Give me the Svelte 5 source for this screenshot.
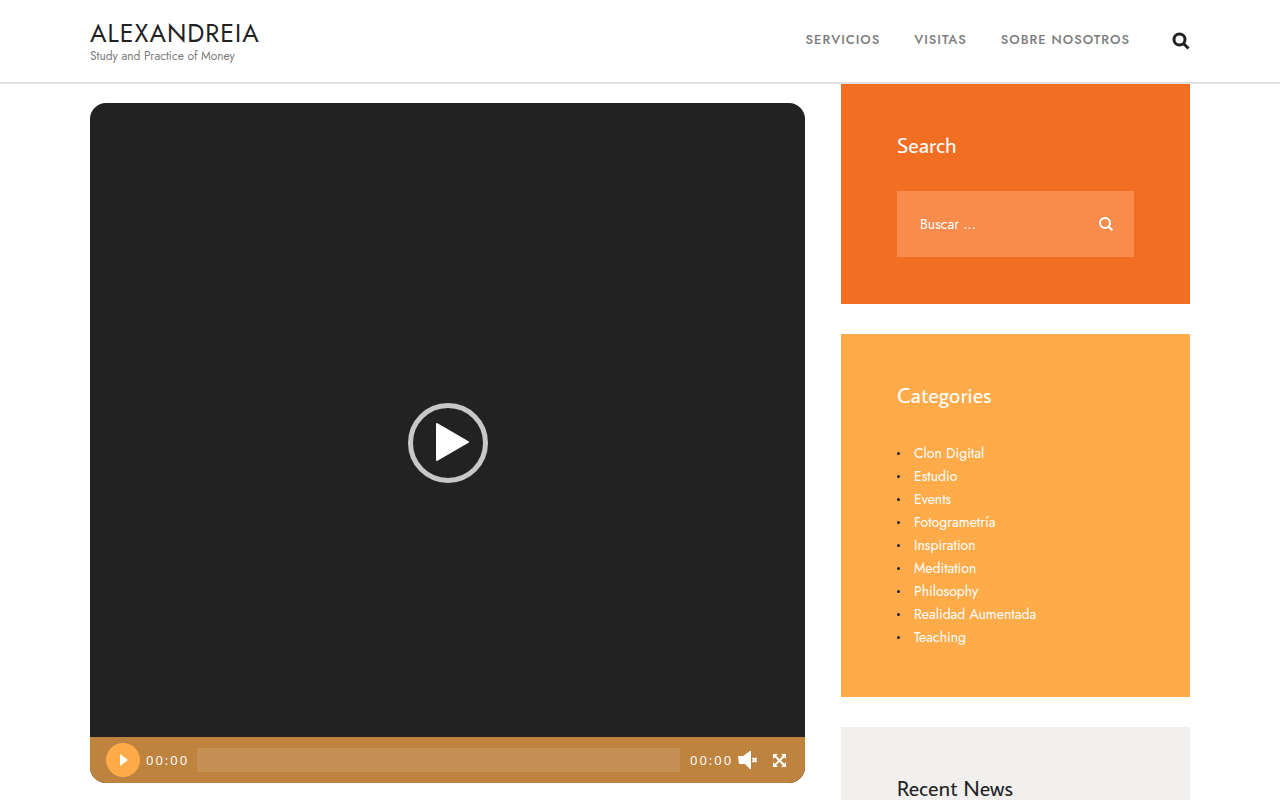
<script lang="ts">
	const navItems = ['Servicios', 'Visitas', 'Sobre Nosotros'];

	const categories = [
		'Clon Digital',
		'Estudio',
		'Events',
		'Fotogrametría',
		'Inspiration',
		'Meditation',
		'Philosophy',
		'Realidad Aumentada',
		'Teaching'
	];

	let query = $state('');
</script>

<header class="site-header">
	<div class="container header-row">
		<div class="brand">
			<a class="brand-name" href="#home">ALEXANDREIA</a>
			<span class="tagline">Study and Practice of Money</span>
		</div>
		<div class="header-right">
			<nav class="menu">
				{#each navItems as item}
					<a href="#{item}">{item}</a>
				{/each}
			</nav>
			<button class="icon-btn" aria-label="Open search">
				<svg width="18" height="18" viewBox="0 0 18 18" fill="none" stroke="#222" stroke-width="3">
					<circle cx="7.5" cy="7.5" r="5.5" />
					<path d="M11.5 11.5 L16.5 16.5" />
				</svg>
			</button>
		</div>
	</div>
</header>

<div class="container content">
	<main>
		<div class="player">
			<button class="big-play" aria-label="Play video">
				<svg width="34" height="40" viewBox="0 0 34 40">
					<path
						d="M2 2 L33 20 L2 38 Z"
						fill="#fff"
						stroke="#fff"
						stroke-width="2"
						stroke-linejoin="round"
					/>
				</svg>
			</button>
			<div class="controls">
				<button class="small-play" aria-label="Play">
					<svg width="10" height="12" viewBox="0 0 10 12">
						<path d="M2 0 L10 6 L2 12 Z" fill="#fff" />
					</svg>
				</button>
				<span class="time">00:00</span>
				<div class="rail"></div>
				<span class="time">00:00</span>
				<button class="icon-btn mute" aria-label="Unmute">
					<svg width="19" height="18" viewBox="0 0 19 18">
						<path d="M0 5 H5 L12 0 H13 V18 H12 L7 13 H1 Z" fill="#fff" />
						<path d="M14.5 7 L18.5 11 M18.5 7 L14.5 11" stroke="#fff" stroke-width="2" />
					</svg>
				</button>
				<button class="icon-btn" aria-label="Fullscreen">
					<svg width="13" height="13" viewBox="0 0 13 13">
						<path
							d="M0 0 H5 L0 5 Z M13 0 V5 L8 0 Z M0 13 V8 L5 13 Z M13 13 H8 L13 8 Z"
							fill="#fff"
						/>
						<path d="M2 2 L11 11 M11 2 L2 11" stroke="#fff" stroke-width="2" />
					</svg>
				</button>
			</div>
		</div>
	</main>

	<aside>
		<section class="widget widget-search">
			<h2>Search</h2>
			<form class="search-form" role="search">
				<input
					type="search"
					aria-label="Buscar"
					placeholder="Buscar …"
					bind:value={query}
				/>
				<button class="icon-btn" type="submit" aria-label="Buscar">
					<svg width="14" height="14" viewBox="0 0 14 14" fill="none" stroke="#fff" stroke-width="2">
						<circle cx="6" cy="6" r="5" />
						<path d="M9.5 9.5 L13.3 13.3" />
					</svg>
				</button>
			</form>
		</section>

		<section class="widget widget-categories">
			<h2>Categories</h2>
			<ul>
				{#each categories as category}
					<li><a href="#{category}">{category}</a></li>
				{/each}
			</ul>
		</section>

		<section class="widget widget-news">
			<h2>Recent News</h2>
		</section>
	</aside>
</div>

<style>
	:global(body) {
		background: #fff;
		color: #222;
		font-family: Jost, Lato, sans-serif;
		font-size: 14px;
	}

	a {
		color: inherit;
		text-decoration: none;
	}

	button {
		border: 0;
		padding: 0;
		background: none;
		cursor: pointer;
	}

	svg {
		display: block;
	}

	.container {
		max-width: 1100px;
		margin: 0 auto;
	}

	.site-header {
		border-bottom: 2px solid #e6e1dd;
	}

	.header-row {
		display: flex;
		justify-content: space-between;
		align-items: center;
		min-height: 82px;
	}

	.brand {
		display: flex;
		flex-direction: column;
	}

	.brand-name {
		font-size: 25px;
		line-height: 30px;
		letter-spacing: 1px;
	}

	.tagline {
		font-size: 12px;
		line-height: 16px;
		color: #7c7c7c;
	}

	.header-right {
		display: flex;
		align-items: center;
		gap: 42px;
	}

	.menu {
		display: flex;
		gap: 34px;
		padding-bottom: 3px;
		font-size: 13px;
		font-weight: 500;
		letter-spacing: 1px;
		text-transform: uppercase;
		color: #7c7c7c;
	}

	.content {
		display: grid;
		grid-template-columns: minmax(0, 1fr) 349px;
		gap: 36px;
	}

	.player {
		position: relative;
		display: flex;
		align-items: center;
		justify-content: center;
		height: 680px;
		margin-top: 19px;
		border-radius: 16px;
		background: #222;
		overflow: hidden;
	}

	.big-play {
		display: flex;
		align-items: center;
		justify-content: center;
		width: 80px;
		height: 80px;
		padding: 0 0 2px 9px;
		border: 5px solid #c8c8c8;
		border-radius: 50%;
	}

	.controls {
		position: absolute;
		left: 0;
		right: 0;
		bottom: 0;
		display: flex;
		align-items: center;
		height: 46px;
		padding: 0 19px 0 16px;
		box-sizing: border-box;
		background: #bd833f;
	}

	.small-play {
		display: flex;
		align-items: center;
		justify-content: center;
		width: 34px;
		height: 34px;
		border-radius: 50%;
		background: #ffab4a;
	}

	.time {
		width: 43px;
		margin-left: 6px;
		font-family: 'Open Sans', sans-serif;
		font-size: 13px;
		letter-spacing: 2px;
		color: #fff;
	}

	.rail {
		flex: 1;
		height: 24px;
		margin: 0 4px 0 8px;
		background: #c59054;
	}

	.mute {
		margin: 0 16px 0 5px;
	}

	.widget {
		margin-bottom: 30px;
		padding: 47px 56px;
		color: #fff;
	}

	.widget h2 {
		margin: 0 0 32px;
		font-family: 'Average Sans', 'Alegreya Sans', Lato, sans-serif;
		font-size: 22px;
		font-weight: 600;
		line-height: 28px;
	}

	.widget-search {
		background: #f16e22;
	}

	.widget-categories {
		background: #ffab4a;
	}

	.widget-news {
		background: #f1f0ee;
		color: #222;
	}

	.search-form {
		display: flex;
		align-items: center;
		padding-right: 21px;
		background: #f78c4c;
	}

	.search-form input {
		flex: 1;
		min-width: 0;
		height: 66px;
		padding: 0 23px;
		border: 0;
		background: none;
		font: inherit;
		color: #fff;
	}

	.search-form input::placeholder {
		color: #fff;
		opacity: 1;
	}

	ul {
		margin: 0;
		padding: 1px 0;
		list-style: none;
	}

	li {
		display: flex;
		align-items: center;
		gap: 14px;
		line-height: 23px;
	}

	li::before {
		content: '';
		width: 3px;
		height: 3px;
		border-radius: 50%;
		background: #222;
	}
</style>
